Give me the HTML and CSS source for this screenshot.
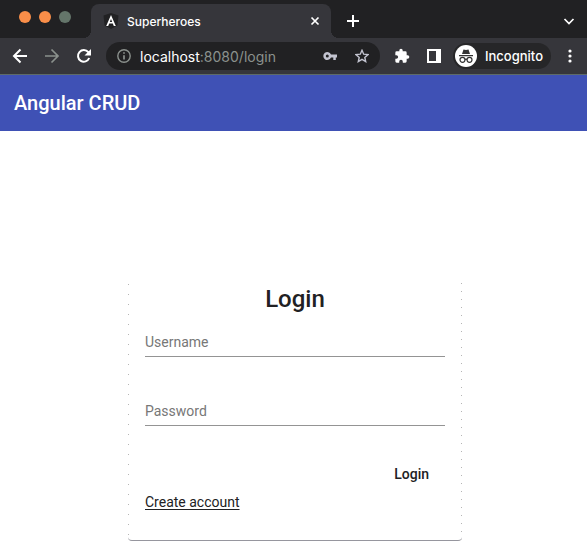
FILE: index.html
```html
<!DOCTYPE html>
<html lang="en">
<head>
<meta charset="utf-8">
<meta name="viewport" content="width=device-width, initial-scale=1">
<title>Superheroes</title>
<link rel="stylesheet" href="styles.css">
</head>
<body>
<header class="browser">
  <div class="tabstrip">
    <div class="lights"><span class="light"></span><span class="light"></span><span class="light light-idle"></span></div>
    <div class="tab">
      <svg class="favicon" width="16" height="16" viewBox="0 0 16 16" aria-hidden="true"><path fill="#212123" d="M8 0 15.500 2.600 14.400 12.400 8 16 1.600 12.400.5 2.600Z"/><path fill="#fff" fill-rule="evenodd" d="M8 2 12.800 13h-2l-1-2.400H6.200l-1 2.400h-2ZM8 6 6.800 9h2.400Z"/></svg>
      <span class="tab-title">Superheroes</span>
      <button class="icon-button" aria-label="Close tab"><svg width="10" height="10" viewBox="0 0 10 10"><path class="line" d="m1.500 1.500 7 7m0-7-7 7"/></svg></button>
    </div>
    <button class="icon-button new-tab" aria-label="New tab"><svg width="12" height="12" viewBox="0 0 12 12"><path class="line heavy" d="M6 0v12M0 6h12"/></svg></button>
    <button class="icon-button tab-search" aria-label="Search tabs"><svg width="12" height="12" viewBox="0 0 12 12"><path class="line" d="m1.500 4 4.500 4.500L10.500 4"/></svg></button>
  </div>
  <div class="toolbar">
    <nav class="history" aria-label="History">
      <button class="icon-button" aria-label="Back"><svg width="16" height="16" viewBox="0 0 16 16"><path class="line heavy" d="M15 8H2m6.500-6.500L2 8l6.500 6.500"/></svg></button>
      <button class="icon-button muted" aria-label="Forward"><svg width="16" height="16" viewBox="0 0 16 16"><path class="line" d="M1 8h13M7.500 1.500 14 8l-6.500 6.500"/></svg></button>
      <button class="icon-button" aria-label="Reload"><svg width="16" height="16" viewBox="0 0 16 16"><path class="line heavy" d="M13.200 10A5.800 5.800 0 1 1 12.300 4.200L14 6"/><path fill="currentColor" d="M15 1v6.500H8.500Z"/></svg></button>
    </nav>
    <div class="address">
      <svg class="muted" width="14" height="14" viewBox="0 0 14 14" aria-hidden="true"><circle class="line thin" cx="7" cy="7" r="6.200"/><path class="line" d="M7 6.200v4.300M7 3.200v1.500"/></svg>
      <span class="url">localhost<span class="path">:8080/login</span></span>
      <button class="icon-button soft" aria-label="Saved passwords"><svg width="14" height="10" viewBox="0 0 14 10"><path fill="currentColor" fill-rule="evenodd" d="M8 3.500h6v3h-1.200V9h-2.500V6.500H8A4 4 0 1 1 8 3.500ZM4.300 3.500a1.500 1.500 0 1 0 0 3 1.500 1.500 0 0 0 0-3Z"/></svg></button>
      <button class="icon-button soft" aria-label="Bookmark this page"><svg width="14" height="14" viewBox="0 0 14 14"><path class="line thin" d="m7 1.300 1.700 3.900 4.300.4-3.200 2.800.9 4.200L7 10.400l-3.700 2.200.9-4.200L1 5.600l4.300-.4Z"/></svg></button>
    </div>
    <div class="actions">
      <button class="icon-button" aria-label="Extensions"><svg width="16" height="16" viewBox="0 0 24 24"><path fill="currentColor" d="M20.500 11H19V7a2 2 0 0 0-2-2h-4V3.500a2.500 2.500 0 0 0-5 0V5H4a2 2 0 0 0-2 2v3.800h1.500a2.700 2.700 0 0 1 0 5.400H2V20a2 2 0 0 0 2 2h3.800v-1.500a2.700 2.700 0 0 1 5.400 0V22H17a2 2 0 0 0 2-2v-4h1.500a2.500 2.500 0 0 0 0-5Z"/></svg></button>
      <button class="icon-button" aria-label="Side panel"><svg width="14" height="14" viewBox="0 0 14 14"><path fill="currentColor" fill-rule="evenodd" d="M0 0h14v14H0ZM2 2v10h7V2Z"/></svg></button>
      <button class="incognito"><svg width="22" height="22" viewBox="0 0 22 22" aria-hidden="true"><circle cx="11" cy="11" r="11" fill="#fff"/><path fill="#333" d="M8.500 4.500q2.500.8 5 0L15 9H7ZM4 10h14v1.200H4Z"/><path fill="none" stroke="#333" stroke-width="1.200" d="M9.800 14.500q1.200-.8 2.400 0"/><circle cx="7.500" cy="14.800" r="2.500" fill="none" stroke="#333" stroke-width="1.200"/><circle cx="14.500" cy="14.800" r="2.500" fill="none" stroke="#333" stroke-width="1.200"/></svg>Incognito</button>
      <button class="icon-button" aria-label="Menu"><svg width="4" height="14" viewBox="0 0 4 14"><g fill="currentColor"><circle cx="2" cy="2" r="1.600"/><circle cx="2" cy="7" r="1.600"/><circle cx="2" cy="12" r="1.600"/></g></svg></button>
    </div>
  </div>
</header>
<div class="appbar">Angular CRUD</div>
<main>
  <form class="card">
    <h1>Login</h1>
    <input class="field" type="text" aria-label="Username" placeholder="Username">
    <input class="field" type="password" aria-label="Password" placeholder="Password">
    <button class="submit" type="button">Login</button>
    <a class="create" href="#create">Create account</a>
  </form>
</main>
</body>
</html>
```
FILE: styles.css
```css
* { box-sizing: border-box; }
body { margin: 0; background: #fff; color: #212123; font-family: Roboto, "Liberation Sans", sans-serif; font-size: 14px; }
button { margin: 0; padding: 0; border: 0; background: none; color: #fff; font: inherit; }
svg { display: block; flex: none; }
.line { fill: none; stroke: currentColor; stroke-width: 1.7; }
.heavy { stroke-width: 2; }
.thin { stroke-width: 1.4; }
.icon-button { display: flex; align-items: center; justify-content: center; flex: none; }
.icon-button.muted, .muted { color: #8b918d; }
.icon-button.soft { color: #c3c4d0; }

.browser { background: #36363b; border-bottom: 1px solid #5e6b68; color: #fff; font-family: Inter, "Liberation Sans", sans-serif; }
.tabstrip { display: flex; align-items: center; height: 38px; padding: 4px 12px 0 19px; background: #212123; }
.lights { display: flex; gap: 8px; margin-right: 20px; padding-bottom: 8px; }
.light { width: 12px; height: 12px; border-radius: 50%; background: #f98e49; }
.light-idle { background: #64756a; }
.tab { position: relative; display: flex; align-items: center; flex: 0 1 240px; height: 34px; padding: 0 11px 0 12px; border-radius: 8px 8px 0 0; background: #36363b; }
.tab::before, .tab::after { content: ""; position: absolute; bottom: 0; width: 8px; height: 8px; }
.tab::before { right: 100%; background: radial-gradient(circle at 0 0, #212123 8px, #36363b 8px); }
.tab::after { left: 100%; background: radial-gradient(circle at 100% 0, #212123 8px, #36363b 8px); }
.favicon { margin-right: 8px; }
.tab-title { flex: 1; font-size: 12px; font-weight: 500; }
.new-tab { margin-left: 16px; }
.tab-search { margin-left: auto; }
.toolbar { display: flex; align-items: center; height: 36px; padding: 0 15px 0 12px; }
.history { display: flex; gap: 16px; margin-right: 14px; }
.address { display: flex; align-items: center; flex: 1; gap: 18px; height: 28px; padding: 0 11px; border-radius: 14px; background: #212123; }
.url { flex: 1; margin-left: -9px; font-size: 14px; }
.path { color: #8b918d; }
.actions { display: flex; align-items: center; gap: 17px; margin-left: 14px; }
.incognito { display: flex; align-items: center; gap: 8px; height: 26px; margin-left: -5px; padding: 0 8px 0 2px; border-radius: 13px; background: #262628; font-size: 13px; font-weight: 500; }

.appbar { display: flex; align-items: center; height: 56px; padding: 0 14px; background: #3f51b5; color: #fff; font-size: 20px; font-weight: 500; }
main { padding: 151px 0 18px 3px; }
.card {
  display: flex; flex-direction: column; max-width: 334px; margin: 0 auto; padding: 1px 17px 28px;
  border-bottom: 1px solid #96969e; border-radius: 0 0 4px 4px;
  background:
    repeating-linear-gradient(#fff 0 2px, #b5b5b5 2px 3px, #fff 3px 10px) left / 1px 100% no-repeat,
    repeating-linear-gradient(#fff 0 1px, #b5b5b5 1px 2px, #fff 2px 8px) right / 1px 100% no-repeat;
}
h1 { margin: 0; font-size: 24px; font-weight: 500; line-height: 32px; text-align: center; }
.field { width: 100%; height: 29px; margin: 13px 0 27px; padding: 0; border: 0; border-bottom: 1px solid #949494; outline: 0; background: none; color: #212123; font: inherit; }
.field::placeholder { color: #777; opacity: 1; }
.submit { align-self: flex-end; height: 36px; margin-top: 3px; padding: 0 16px; color: #212123; font-weight: 500; }
.create { align-self: flex-start; color: #212123; line-height: 20px; text-underline-offset: 2px; }
```
